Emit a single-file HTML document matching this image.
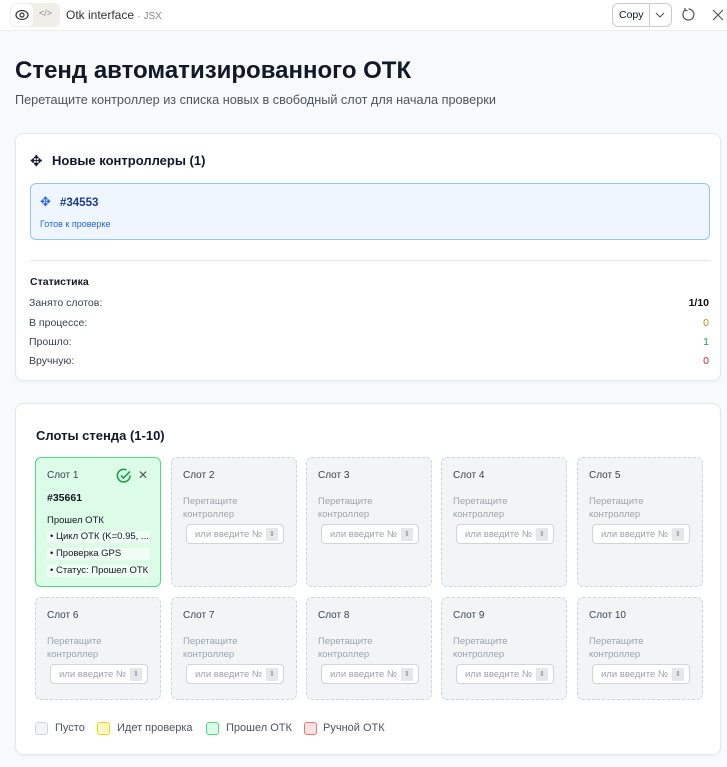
<!DOCTYPE html>
<html><head><meta charset="utf-8"><style>
*{box-sizing:border-box;margin:0;padding:0}
body{width:727px;height:767px;overflow:hidden;background:#f8f9fb;font-family:"Liberation Sans","DejaVu Sans",sans-serif;color:#111827;position:relative}
.top{position:absolute;left:0;top:0;width:727px;height:31px;background:#fff;border-bottom:1px solid #eee}
.abs{position:absolute}
.card{position:absolute;background:#fff;border:1px solid #e5e7eb;border-radius:8px;box-shadow:0 1px 2px rgba(0,0,0,.05)}
.slot{position:absolute;width:126px;border:1px dashed #d1d5db;border-radius:6px;background:#f3f4f6}
.slot .t{position:absolute;left:11px;top:12px;font-size:10px;color:#374151}
.slot .d{position:absolute;left:11px;top:37px;font-size:9.5px;color:#9ca3af;line-height:13px}
.slot .i{position:absolute;left:14px;top:66px;width:98px;height:20px;border:1px solid #d1d5db;border-radius:4px;background:#fff;font-size:9.5px;color:#9ca3af;padding:4px 0 0 8px}
.slot .i span{position:absolute;right:5px;top:3px;width:12px;height:13px;background:#e5e7eb;font-size:7px;text-align:center;line-height:13px;color:#888}
.row{position:absolute;left:29px;width:680px;font-size:10.5px;color:#374151}
.row b{position:absolute;right:0;font-weight:normal}
.lg{position:absolute;top:722px;width:13px;height:13px;border-radius:3px;border:1px solid}
.lt{position:absolute;top:722px;font-size:11px;color:#4b5563}
.li{background:#f0fdf4;border-radius:2px;height:12px;margin-top:3px;font-size:9.5px;padding-left:3px;line-height:12px;width:103px}
</style></head><body>
<div class="top">
 <div class="abs" style="left:10px;top:3px;width:50px;height:24px;background:#efeee9;border-radius:6px"></div>
 <div class="abs" style="left:11px;top:4px;width:22px;height:22px;background:#fff;border-radius:5px"></div>
 <svg class="abs" style="left:15px;top:8px" width="14" height="14" viewBox="0 0 14 14"><ellipse cx="7" cy="7" rx="6" ry="4.5" fill="none" stroke="#333" stroke-width="1.2"/><circle cx="7" cy="7" r="2" fill="none" stroke="#333" stroke-width="1.2"/></svg>
 <div class="abs" style="left:39px;top:8px;font-size:9px;color:#888">&lt;/&gt;</div>
 <div class="abs" style="left:66px;top:8px;font-size:12px;color:#333">Otk interface <span style="color:#888;font-size:10px">· JSX</span></div>
 <div class="abs" style="left:612px;top:3px;width:60px;height:24px;border:1px solid #ccc;border-radius:6px"></div>
 <div class="abs" style="left:649px;top:3px;width:1px;height:24px;background:#ccc"></div>
 <div class="abs" style="left:619px;top:9px;font-size:10.5px">Copy</div>
 <svg class="abs" style="left:655px;top:11px" width="10" height="8" viewBox="0 0 10 8"><path d="M1 2l4 4 4-4" fill="none" stroke="#555" stroke-width="1.1"/></svg>
 <svg class="abs" style="left:681px;top:7px" width="15" height="15" viewBox="0 0 15 15"><path d="M4 3.2A5.5 5.5 0 1 0 7.5 2" fill="none" stroke="#555" stroke-width="1.2"/><path d="M4 1v2.5h2.5" fill="none" stroke="#555" stroke-width="1.2"/></svg>
 <svg class="abs" style="left:712px;top:9px" width="12" height="12" viewBox="0 0 12 12"><path d="M1 1l10 10M11 1L1 11" stroke="#555" stroke-width="1.2"/></svg>
</div>
<div class="abs" style="left:15px;top:57px;font-size:24px;font-weight:bold">Стенд автоматизированного ОТК</div>
<div class="abs" style="left:15px;top:93px;font-size:12.7px;color:#4b5563">Перетащите контроллер из списка новых в свободный слот для начала проверки</div>

<div class="card" style="left:15px;top:133px;width:706px;height:248px">
 <div class="abs" style="left:14px;top:18px;font-size:15px">✥</div>
 <div class="abs" style="left:36px;top:19px;font-size:13px;font-weight:bold">Новые контроллеры (1)</div>
 <div class="abs" style="left:14px;top:49px;width:680px;height:57px;background:#eff6ff;border:1px solid #93c5fd;border-radius:6px">
  <div class="abs" style="left:9px;top:10px;font-size:13px;color:#2563eb">✥</div>
  <div class="abs" style="left:29px;top:13px;font-size:11.5px;font-weight:bold;color:#1e3a8a">#34553</div>
  <div class="abs" style="left:9px;top:35px;font-size:9px;color:#2563eb">Готов к проверке</div>
 </div>
 <div class="abs" style="left:14px;top:126px;width:680px;height:1px;background:#e5e7eb"></div>
 <div class="abs" style="left:14px;top:142px;font-size:10.5px;font-weight:bold">Статистика</div>
</div>
<div class="row" style="top:297px">Занято слотов:<b style="font-weight:bold;color:#111">1/10</b></div>
<div class="row" style="top:317px">В процессе:<b style="color:#ca8a04">0</b></div>
<div class="row" style="top:336px">Прошло:<b style="color:#16a34a">1</b></div>
<div class="row" style="top:355px">Вручную:<b style="color:#dc2626">0</b></div>

<div class="card" style="left:15px;top:403px;width:706px;height:352px">
 <div class="abs" style="left:20px;top:24px;font-size:13px;font-weight:bold">Слоты стенда (1-10)</div>
</div>

<div class="slot" style="left:35px;top:457px;height:130px;background:#dcfce7;border:1px solid #4ade80">
 <div class="t">Слот 1</div>
 <svg class="abs" style="left:80px;top:10px" width="16" height="16" viewBox="0 0 16 16"><path d="M14 7.5A6.3 6.3 0 1 1 10.5 2" fill="none" stroke="#16a34a" stroke-width="1.6"/><path d="M5 7.5l2.5 2.5L14 3.5" fill="none" stroke="#16a34a" stroke-width="1.6"/></svg>
 <div class="abs" style="left:102px;top:10px;font-size:12px;color:#555">✕</div>
 <div class="abs" style="left:11px;top:34px;font-size:10.5px;font-weight:bold">#35661</div>
 <div class="abs" style="left:11px;top:57px;font-size:9.5px">Прошел ОТК</div>
 <div class="abs" style="left:11px;top:70px">
  <div class="li">• Цикл ОТК (K=0.95, ...</div>
  <div class="li" style="margin-top:5px">• Проверка GPS</div>
  <div class="li" style="margin-top:5px">• Статус: Прошел ОТК</div>
 </div>
</div>
<div class="slot" style="left:171px;top:457px;height:130px"><div class="t">Слот 2</div><div class="d">Перетащите<br>контроллер</div><div class="i">или введите №<span>⇕</span></div></div>
<div class="slot" style="left:306px;top:457px;height:130px"><div class="t">Слот 3</div><div class="d">Перетащите<br>контроллер</div><div class="i">или введите №<span>⇕</span></div></div>
<div class="slot" style="left:441px;top:457px;height:130px"><div class="t">Слот 4</div><div class="d">Перетащите<br>контроллер</div><div class="i">или введите №<span>⇕</span></div></div>
<div class="slot" style="left:577px;top:457px;height:130px"><div class="t">Слот 5</div><div class="d">Перетащите<br>контроллер</div><div class="i">или введите №<span>⇕</span></div></div>
<div class="slot" style="left:35px;top:597px;height:103px"><div class="t">Слот 6</div><div class="d">Перетащите<br>контроллер</div><div class="i">или введите №<span>⇕</span></div></div>
<div class="slot" style="left:171px;top:597px;height:103px"><div class="t">Слот 7</div><div class="d">Перетащите<br>контроллер</div><div class="i">или введите №<span>⇕</span></div></div>
<div class="slot" style="left:306px;top:597px;height:103px"><div class="t">Слот 8</div><div class="d">Перетащите<br>контроллер</div><div class="i">или введите №<span>⇕</span></div></div>
<div class="slot" style="left:441px;top:597px;height:103px"><div class="t">Слот 9</div><div class="d">Перетащите<br>контроллер</div><div class="i">или введите №<span>⇕</span></div></div>
<div class="slot" style="left:577px;top:597px;height:103px"><div class="t">Слот 10</div><div class="d">Перетащите<br>контроллер</div><div class="i">или введите №<span>⇕</span></div></div>

<div class="lg" style="left:35px;background:#f3f4f6;border-color:#d1d5db"></div><div class="lt" style="left:55px">Пусто</div>
<div class="lg" style="left:97px;background:#fef9c3;border-color:#facc15"></div><div class="lt" style="left:117px">Идет проверка</div>
<div class="lg" style="left:206px;background:#dcfce7;border-color:#4ade80"></div><div class="lt" style="left:226px">Прошел ОТК</div>
<div class="lg" style="left:304px;background:#fee2e2;border-color:#f87171"></div><div class="lt" style="left:323px">Ручной ОТК</div>
</body></html>
